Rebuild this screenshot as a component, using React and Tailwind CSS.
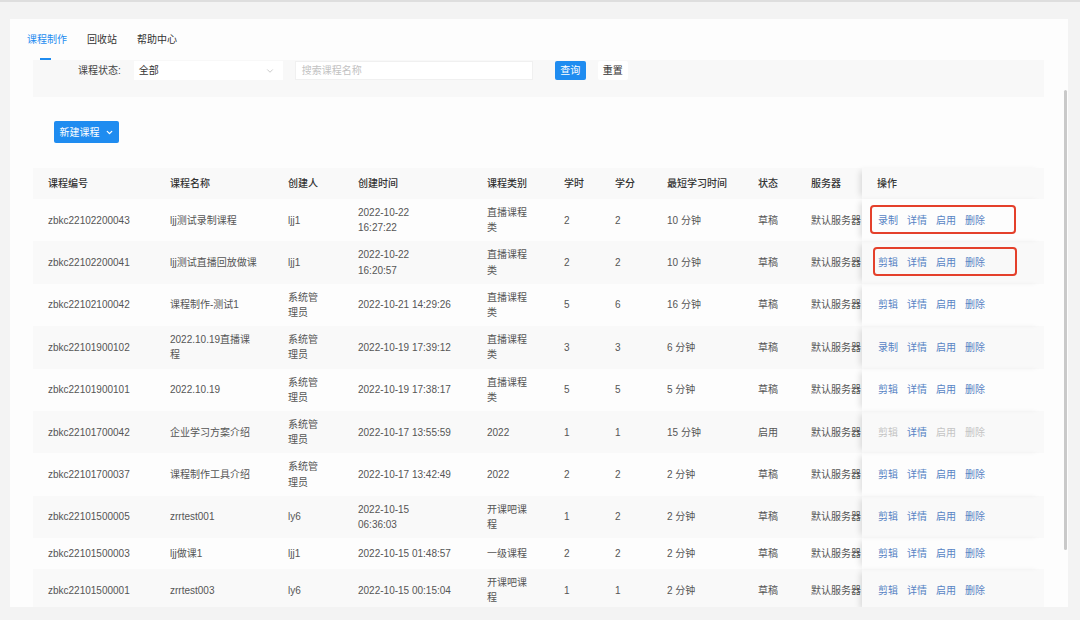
import React from 'react';
import { ChevronDown } from 'lucide-react';

const columns = [
  { key: 'code', title: '课程编号', w: 'w-[122px]' },
  { key: 'name', title: '课程名称', w: 'w-[118px]' },
  { key: 'owner', title: '创建人', w: 'w-[70px]' },
  { key: 'time', title: '创建时间', w: 'w-[129px]' },
  { key: 'type', title: '课程类别', w: 'w-[77px]' },
  { key: 'hours', title: '学时', w: 'w-[51px]' },
  { key: 'credit', title: '学分', w: 'w-[52px]' },
  { key: 'min', title: '最短学习时间', w: 'w-[91px]' },
  { key: 'status', title: '状态', w: 'w-[53px]' },
  { key: 'server', title: '服务器', w: 'w-[66px]' },
];

const admin = ['系统管', '理员'];
const live = ['直播课程', '类'];
const server = '默认服务器';

// rows as they show in the list; arrays are wrapped cells
const rows = [
  { code: 'zbkc22102200043', name: 'ljj测试录制课程', owner: 'ljj1', time: ['2022-10-22', '16:27:22'], type: live, hours: 2, credit: 2, min: '10 分钟', status: '草稿', server, first: '录制', mark: 'left-[8px] w-[146px]' },
  { code: 'zbkc22102200041', name: 'ljj测试直播回放做课', owner: 'ljj1', time: ['2022-10-22', '16:20:57'], type: live, hours: 2, credit: 2, min: '10 分钟', status: '草稿', server, first: '剪辑', mark: 'left-[11px] w-[144px]' },
  { code: 'zbkc22102100042', name: '课程制作-测试1', owner: admin, time: '2022-10-21 14:29:26', type: live, hours: 5, credit: 6, min: '16 分钟', status: '草稿', server, first: '剪辑' },
  { code: 'zbkc22101900102', name: ['2022.10.19直播课', '程'], owner: admin, time: '2022-10-19 17:39:12', type: live, hours: 3, credit: 3, min: '6 分钟', status: '草稿', server, first: '录制' },
  { code: 'zbkc22101900101', name: '2022.10.19', owner: admin, time: '2022-10-19 17:38:17', type: live, hours: 5, credit: 5, min: '5 分钟', status: '草稿', server, first: '剪辑' },
  { code: 'zbkc22101700042', name: '企业学习方案介绍', owner: admin, time: '2022-10-17 13:55:59', type: '2022', hours: 1, credit: 1, min: '15 分钟', status: '启用', server, first: '剪辑', disabled: true },
  { code: 'zbkc22101700037', name: '课程制作工具介绍', owner: admin, time: '2022-10-17 13:42:49', type: '2022', hours: 2, credit: 2, min: '2 分钟', status: '草稿', server, first: '剪辑' },
  { code: 'zbkc22101500005', name: 'zrrtest001', owner: 'ly6', time: ['2022-10-15', '06:36:03'], type: ['开课吧课', '程'], hours: 1, credit: 2, min: '2 分钟', status: '草稿', server, first: '剪辑' },
  { code: 'zbkc22101500003', name: 'ljj做课1', owner: 'ljj1', time: '2022-10-15 01:48:57', type: '一级课程', hours: 2, credit: 2, min: '2 分钟', status: '草稿', server, first: '剪辑' },
  { code: 'zbkc22101500001', name: 'zrrtest003', owner: 'ly6', time: '2022-10-15 00:15:04', type: ['开课吧课', '程'], hours: 1, credit: 1, min: '2 分钟', status: '草稿', server, first: '剪辑' },
];

function Cell({ value }) {
  if (Array.isArray(value)) {
    return value.map((line, i) => <span key={i} className="block">{line}</span>);
  }
  return value;
}

function Actions({ row }) {
  const on = 'text-[#5783c4]';
  const off = 'text-[#c4c4c4]';
  return (
    <div className="flex gap-[9px] pl-[1px]">
      <span className={row.disabled ? off : on}>{row.first}</span>
      <span className={on}>详情</span>
      <span className={row.disabled ? off : on}>启用</span>
      <span className={row.disabled ? off : on}>删除</span>
    </div>
  );
}

export default function App() {
  return (
    <div
      className="w-[1080px] h-[620px] bg-[#f3f3f3] border-t-2 border-[#dedede] overflow-hidden pt-[17px] pl-[10px]"
      style={{ fontFamily: '"Liberation Sans", "Noto Sans CJK SC", sans-serif' }}
    >
      <div className="relative w-[1058px] h-[588px] bg-[#fdfdfd] overflow-hidden">
        {/* Tabs */}
        <div className="flex gap-[20px] pl-[17px] pt-[14px] text-[10px] leading-[14px] text-[#333]">
          <div className="flex flex-col">
            <span className="text-[#1f8cf0]">课程制作</span>
            <span className="ml-[13px] mt-[11px] w-[11px] h-[2px] bg-[#1f8cf0]" />
          </div>
          <span>回收站</span>
          <span>帮助中心</span>
        </div>

        {/* Filter bar */}
        <div className="ml-[23px] w-[1011px] h-[37px] bg-[#f8f8f8] flex items-start pt-[1px] pl-[45px] text-[10px]">
          <span className="leading-[19px] text-[#444]">课程状态:</span>
          <div className="ml-[13px] w-[149px] h-[19px] bg-white flex items-center justify-between pl-[5px] pr-[8px] text-[#333]">
            <span>全部</span>
            <ChevronDown size={10} strokeWidth={1.5} className="text-[#aaa]" />
          </div>
          <div className="ml-[12px] w-[238px] h-[19px] bg-white border border-[#f0f0f0] flex items-center pl-[6px] text-[#c2c2c2]">
            搜索课程名称
          </div>
          <button className="ml-[22px] w-[31px] h-[19px] bg-[#1f8cf0] text-white rounded-[2px] text-[10px]">查询</button>
          <button className="ml-[12px] w-[30px] h-[19px] bg-white text-[#333] rounded-[2px] text-[10px]">重置</button>
        </div>

        {/* Create */}
        <div className="mt-[24px] ml-[44px]">
          <button className="w-[65px] h-[22px] bg-[#1f8cf0] text-white rounded-[2px] text-[10px] flex items-center justify-center gap-[5px]">
            新建课程
            <ChevronDown size={9} strokeWidth={3.5} />
          </button>
        </div>

        {/* Table */}
        <table className="mt-[25px] ml-[23px] w-[1011px] table-fixed border-separate border-spacing-0 text-[10px] leading-[15.2px]">
          <thead>
            <tr className="h-[31px] bg-[#f9f9f9] text-[#333] font-medium">
              {columns.map((c) => (
                <th key={c.key} className={`${c.w} px-[15px] text-left font-medium align-middle`}>{c.title}</th>
              ))}
              <th className="w-[182px] px-[15px] text-left font-medium shadow-[-5px_0_6px_-3px_rgba(0,0,0,0.13)]">操作</th>
            </tr>
          </thead>
          <tbody className="text-[#555]">
            {rows.map((row, i) => (
              <tr key={row.code} className={`h-[31px] ${i % 2 === 1 ? 'bg-[#f9f9f9]' : 'bg-[#fdfdfd]'}`}>
                {columns.map((c) => (
                  <td key={c.key} className="px-[15px] py-[6px] align-middle whitespace-nowrap">
                    <Cell value={row[c.key]} />
                  </td>
                ))}
                <td className="relative px-[15px] py-[6px] align-middle whitespace-nowrap shadow-[-5px_0_6px_-3px_rgba(0,0,0,0.13)]">
                  <Actions row={row} />
                  {row.mark && (
                    <div className={`absolute top-[6px] h-[29px] ${row.mark} border-2 border-[#e4402b] rounded-[4px]`} />
                  )}
                </td>
              </tr>
            ))}
          </tbody>
        </table>

        {/* Scrollbar */}
        <div className="absolute top-[71px] right-[1px] w-[3px] h-[460px] bg-[#c9c9c9] rounded-full" />
      </div>
    </div>
  );
}
